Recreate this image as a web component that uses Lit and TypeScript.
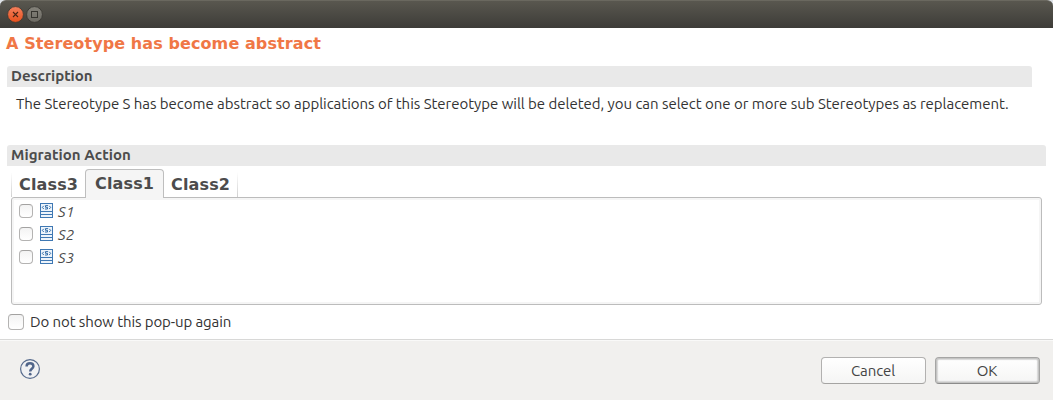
import { LitElement, html, css } from "lit";
import { customElement, property, state } from "lit/decorators.js";

@customElement("check-box")
class CheckBox extends LitElement {
  @property({ type: Boolean }) checked = false;
  static styles = css`
    :host { display: block; flex: none; width: 14px; height: 14px; }
    .box {
      box-sizing: border-box; width: 100%; height: 100%;
      border: 1px solid #b4b3b2; border-top-color: #a3a2a1; border-radius: 4px;
      background: linear-gradient(#f3f3f3, #ffffff);
    }
    svg { display: block; width: 100%; height: 100%; }
  `;
  render() {
    return html`<div class="box" @click=${() => (this.checked = !this.checked)}>
      ${this.checked ? html`<svg viewBox="0 0 12 12"><path d="M2 6l3 3 5-7" fill="none" stroke="#4c4c4c" stroke-width="2" /></svg>` : null}
    </div>`;
  }
}

const stereotypeIcon = html`<svg class="icon" width="13" height="15" viewBox="0 0 13 15">
  <rect x=".5" y=".5" width="12" height="14" fill="#edf4fb" stroke="#3f78b3" />
  <path d="M1 8.5h11M1 11.5h11" stroke="#3f78b3" />
  <g fill="none" stroke="#20609f">
    <path d="M3.8 2.8L2.3 4.4l1.5 1.6M9.2 2.8l1.5 1.6L9.2 6" stroke-width=".9" />
    <path d="M8 2.6H5.5v1.7h2V6H5" stroke-width=".9" />
  </g>
</svg>`;

@customElement("app-root")
class AppRoot extends LitElement {
  @state() active = "Class1";
  tabs = ["Class3", "Class1", "Class2"];
  items = ["S1", "S2", "S3"];

  static styles = css`
    :host {
      display: flex; flex-direction: column; width: 1053px; height: 400px; overflow: hidden;
      background: #fff; color: #333; white-space: nowrap;
      font: 15px/20px "Ubuntu", "Noto Sans", "Open Sans", sans-serif;
    }
    * { box-sizing: border-box; }
    svg { display: block; flex: none; }
    .corner { background: #dfe3e8; flex: none; }
    .titlebar {
      height: 28px; display: flex; align-items: center; gap: 2px; padding: 0 0 0 7px;
      border-radius: 6px 6px 0 0; border-top: 1px solid #6a685f;
      background: linear-gradient(#59574f, #3d3c38);
    }
    .content { height: 311px; flex: none; display: flex; flex-direction: column; }
    .heading {
      margin: 6px 0 0 6px; height: 19px; color: #f07746;
      font: bold 16px/20px "DejaVu Sans", sans-serif; letter-spacing: 0.09px;
    }
    .section {
      margin-left: 7px; height: 21px; padding-left: 4px; line-height: 20px;
      background: #e9e9e9; border-radius: 3px 3px 0 0; font-weight: 700; color: #4c4c4c;
    }
    .description { margin-top: 13px; width: 1025px; letter-spacing: -0.03px; }
    .migration { margin-top: 31px; width: 1039px; letter-spacing: 0.07px; }
    .message { margin: 7px 0 0 16px; height: 20px; letter-spacing: -0.03px; }
    .tabs { display: flex; margin: 3px 0 0 11px; height: 28px; align-items: flex-end; }
    .tab {
      height: 25px; width: 74px; padding-left: 8px; color: #4c4c4c;
      font: bold 16px/25px "DejaVu Sans", sans-serif; letter-spacing: 0.15px;
      background: linear-gradient(#fff, #d0d0d0) left / 1px 100% no-repeat;
    }
    .tab:last-child {
      width: 74px; padding-left: 7px;
      background: linear-gradient(#fff, #d0d0d0) right / 1px 100% no-repeat;
    }
    .tab.active {
      height: 29px; width: 79px; margin-bottom: -1px; padding-left: 9px; line-height: 28px;
      background: #f5f5f5; border: 1px solid #bebebe; border-bottom: 0; border-radius: 4px 4px 0 0;
      z-index: 1;
    }
    .panel {
      margin-left: 11px; width: 1031px; height: 108px; padding: 1px 0 0 4px;
      border: 1px solid #bcbcbc; border-radius: 3px; box-shadow: inset 0 0 0 2px #f5f5f5;
    }
    .item { display: flex; height: 23px; align-items: center; padding-left: 3px; }
    .item .icon { margin: 0 0 0 7px; }
    .item .label { margin: 3px 0 0 5px; font-style: italic; color: #4c4c4c; letter-spacing: 0.1px; }
    .again { display: flex; align-items: center; height: 20px; margin: 7px 0 0 8px; gap: 6px; }
    .again check-box { width: 16px; height: 16px; }
    .again .label { letter-spacing: -0.1px; }
    .footer {
      height: 61px; display: flex; align-items: center; padding: 1px 13px 0 19px;
      border-top: 1px solid #d8d8d7; box-shadow: inset 0 1px #f9f9f8; background: #f1f0ee;
    }
    .help { margin-top: -4px; }
    .spacer { flex: 1; }
    .button {
      width: 105px; height: 27px; margin-left: 9px; padding-right: 1px; text-align: center; line-height: 26px;
      border: 1px solid #b2b1b0; border-bottom-color: #a5a4a2; border-radius: 4px;
      background: linear-gradient(#fff, #f5f5f4); color: #444; letter-spacing: -0.1px;
    }
    .button.default {
      border-color: #a5a5a4; border-bottom-color: #8b8b8a;
      box-shadow: inset 0 0 0 1px #c4c4c3, inset 0 0 1px 2px #d8d8d7;
    }
  `;

  render() {
    return html`
      <div class="corner"><div class="titlebar">
        <svg width="17" height="17" viewBox="0 0 17 17">
          <defs><linearGradient id="close" x2="0" y2="1"><stop stop-color="#f4805d" /><stop offset="1" stop-color="#e8501c" /></linearGradient></defs>
          <circle cx="8.5" cy="8.5" r="7.9" fill="url(#close)" stroke="#3b3832" stroke-width=".8" />
          <path d="M6 6l5 5M11 6l-5 5" stroke="#4a2515" stroke-width="1.1" />
        </svg>
        <svg width="17" height="17" viewBox="0 0 17 17">
          <defs><linearGradient id="max" x2="0" y2="1"><stop stop-color="#84827a" /><stop offset="1" stop-color="#6c6a63" /></linearGradient></defs>
          <circle cx="8.5" cy="8.5" r="7.9" fill="url(#max)" stroke="#363530" stroke-width=".8" />
          <rect x="5.5" y="5.5" width="6" height="6" fill="none" stroke="#35342f" />
        </svg>
      </div></div>
      <div class="content">
        <div class="heading">A Stereotype has become abstract</div>
        <div class="section description">Description</div>
        <div class="message">The Stereotype S has become abstract so applications of this Stereotype will be deleted, you can select one or more sub Stereotypes as replacement.</div>
        <div class="section migration">Migration Action</div>
        <div class="tabs">
          ${this.tabs.map((t) => html`<div class="tab ${t === this.active ? "active" : ""}" @click=${() => (this.active = t)}>${t}</div>`)}
        </div>
        <div class="panel">
          ${this.items.map((i) => html`<div class="item"><check-box></check-box>${stereotypeIcon}<span class="label">${i}</span></div>`)}
        </div>
        <div class="again"><check-box></check-box><span class="label">Do not show this pop-up again</span></div>
      </div>
      <div class="footer">
        <svg class="help" width="22" height="22" viewBox="0 0 22 22">
          <circle cx="11" cy="11" r="9.4" fill="#f0f1f3" stroke="#566a8c" stroke-width="1.2" />
          <path d="M7.6 8.4C7.6 6.2 9 5.2 11 5.2s3.4 1.1 3.4 3c0 2.6-3.2 2.5-3.2 5.2" fill="none" stroke="#50658a" stroke-width="2.5" />
          <circle cx="11.2" cy="16.2" r="1.4" fill="#50658a" />
        </svg>
        <span class="spacer"></span>
        <div class="button">Cancel</div>
        <div class="button default">OK</div>
      </div>
    `;
  }
}
